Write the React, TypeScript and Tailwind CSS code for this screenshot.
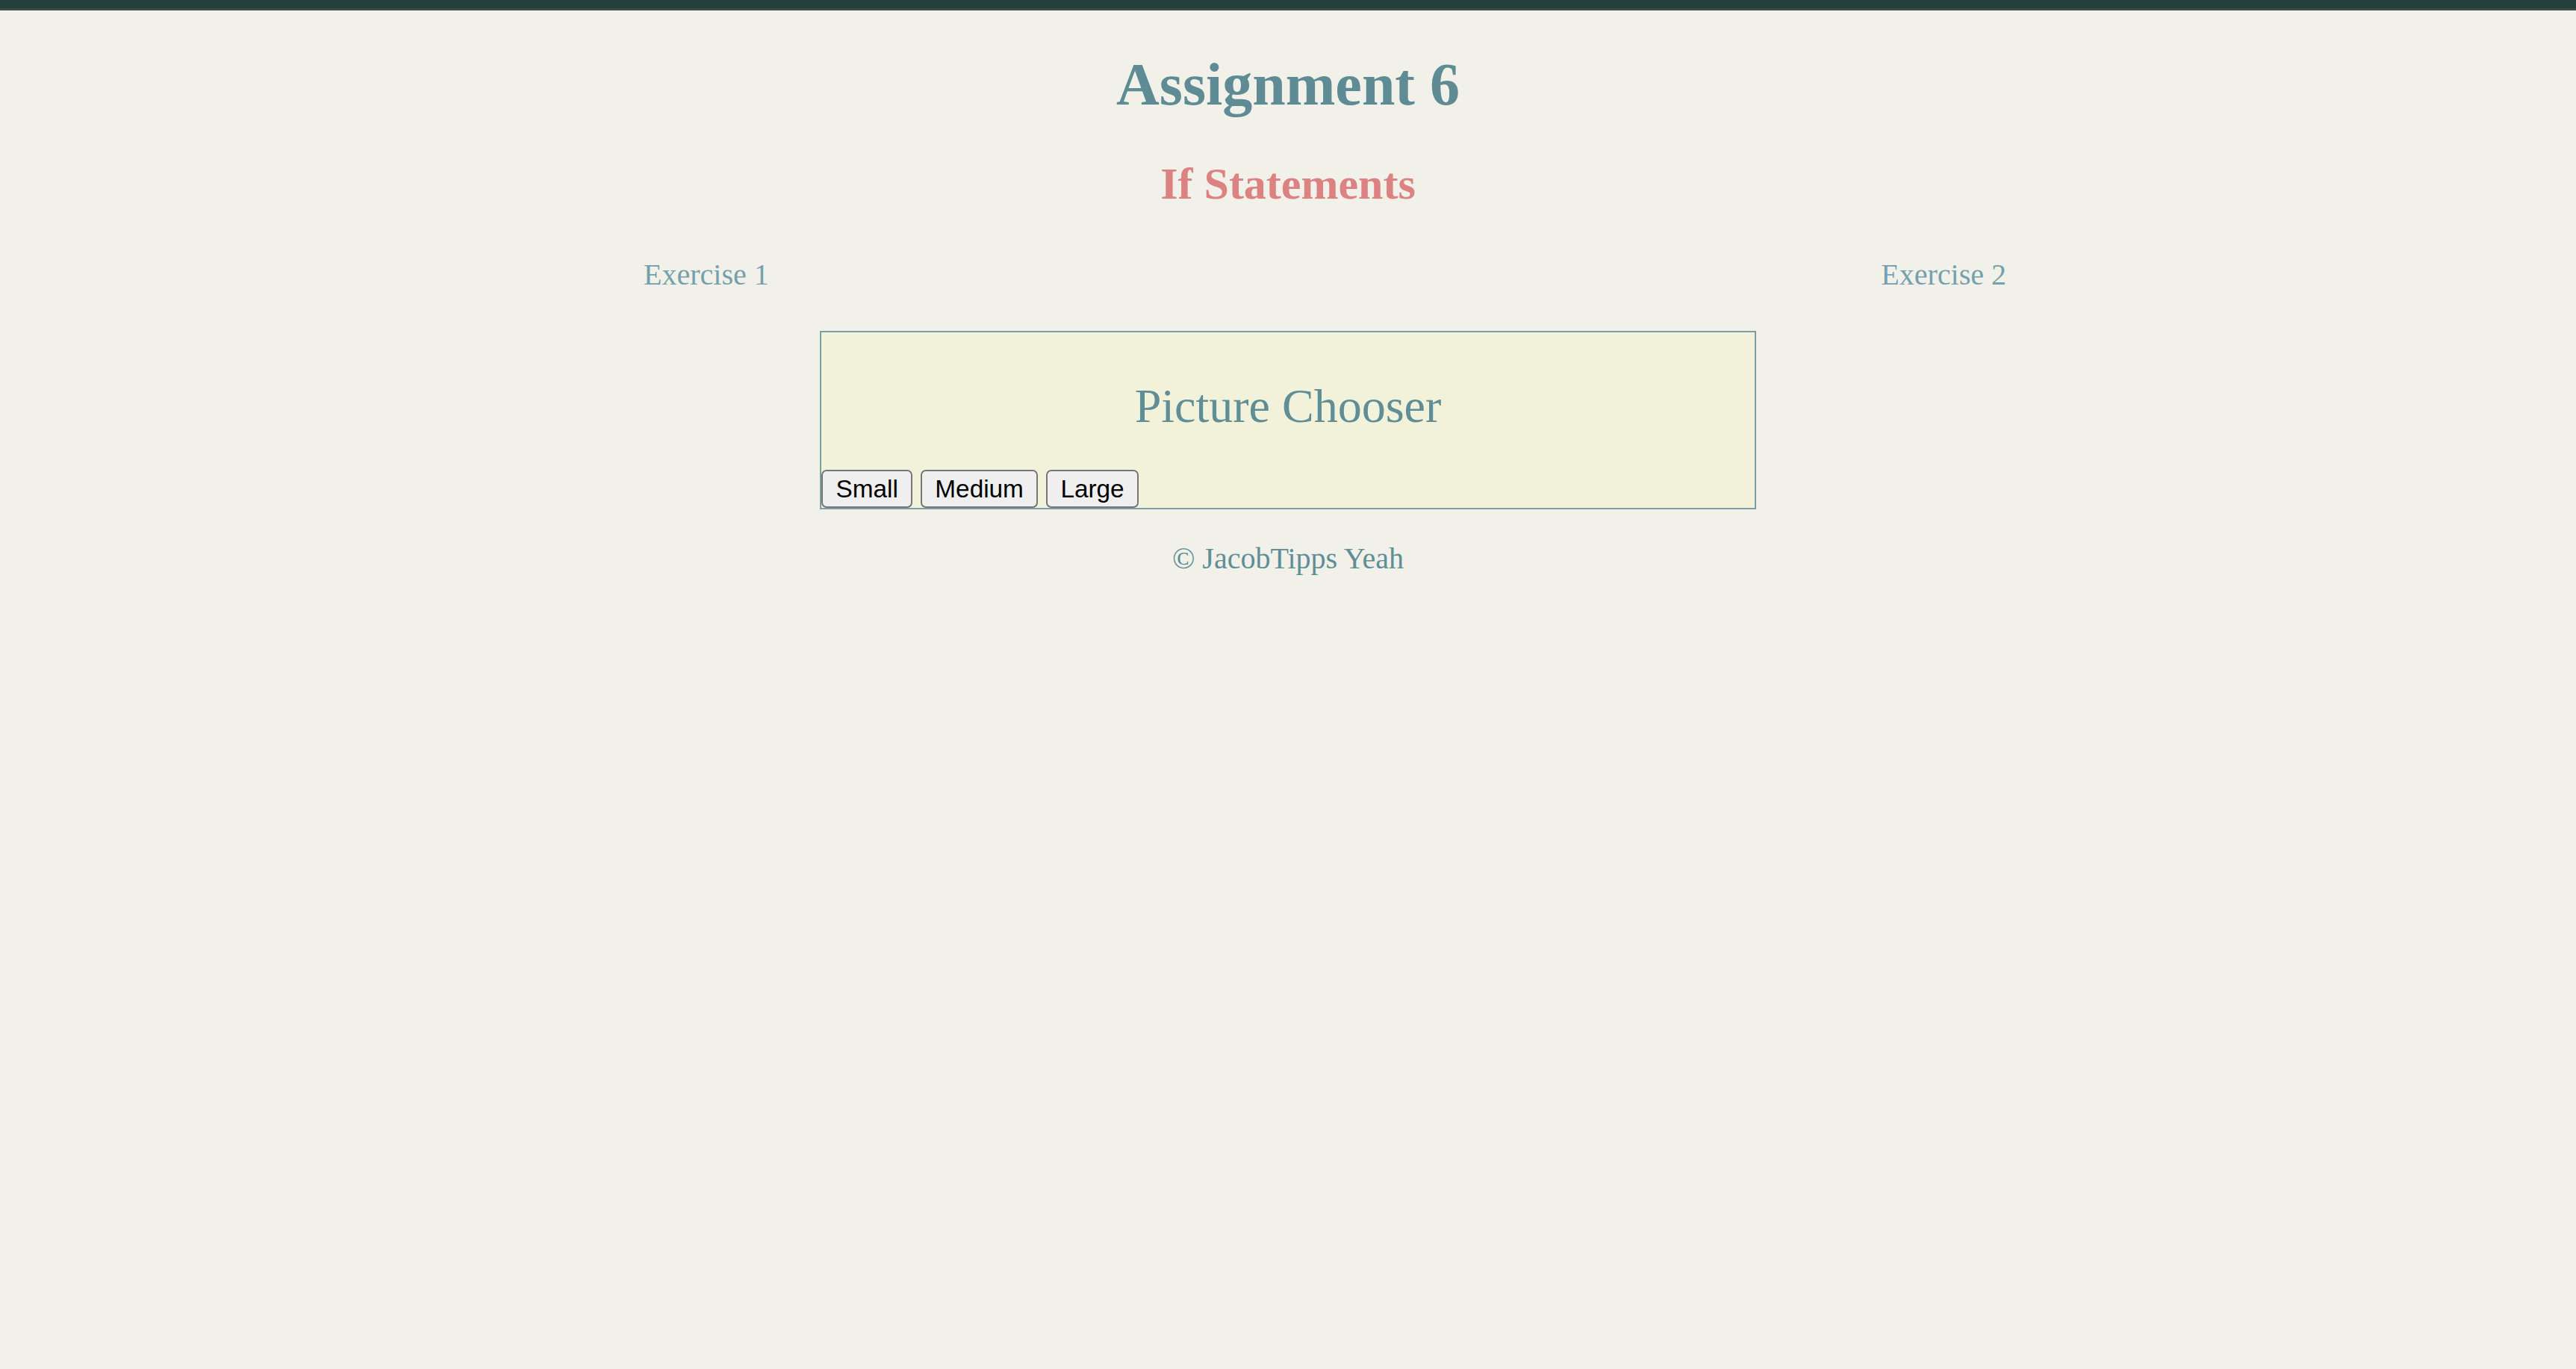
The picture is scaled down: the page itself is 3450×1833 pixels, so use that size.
export default function App() {
  const sizes = ['Small', 'Medium', 'Large'];

  return (
    <div className="min-h-screen bg-[#f1f1e9] font-['Liberation_Serif','Times_New_Roman',serif]">
      {/* top strip */}
      <div className="h-[14px] bg-[#253f3b] border-b-[3px] border-[#3b4a48]" />

      <h1 className="mt-[53px] text-center text-[80px] leading-[92px] font-bold text-[#5f8c94]">
        Assignment 6
      </h1>
      <h2 className="mt-[53px] text-center text-[60px] leading-[69px] font-bold text-[#dc8282]">
        If Statements
      </h2>

      {/* exercise links */}
      <nav className="mt-[64px] flex justify-between pl-[862px] pr-[763px] text-[40px] leading-[46px] text-[#74a1ad]">
        <a href="#">Exercise 1</a>
        <a href="#">Exercise 2</a>
      </nav>

      {/* picture chooser */}
      <div className="mx-auto mt-[52px] w-[1254px] border-2 border-[#7c9ea4] bg-[#f2f1d9]">
        <h3 className="pt-[62px] text-center text-[64px] leading-[74px] text-[#5f8e97]">
          Picture Chooser
        </h3>
        <div className="mt-[48px] flex gap-[10.5px]">
          {sizes.map((size) => (
            <button
              key={size}
              className="h-[51px] flex items-center justify-center px-[17.5px] border-2 border-[#767676] rounded-[7px] bg-[#efefef] font-['Liberation_Sans',Arial,sans-serif] text-[33.33px] leading-[38px] text-black"
            >
              {size}
            </button>
          ))}
        </div>
      </div>

      <footer className="mt-[43px] text-center text-[40px] leading-[46px] text-[#5f8e97]">
        © JacobTipps Yeah
      </footer>
    </div>
  );
}
